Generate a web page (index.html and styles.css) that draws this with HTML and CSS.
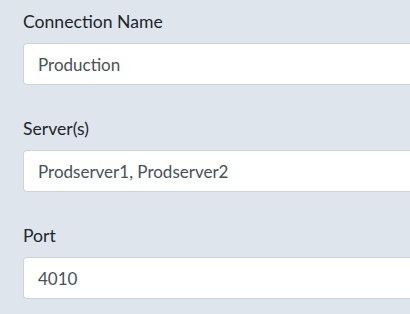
FILE: index.html
```html
<!DOCTYPE html>
<html><head><link rel="stylesheet" href="styles.css"></head>
<body>
<form class="form">
  <div class="group">
    <label class="label" for="name">Connection Name</label>
    <input class="control" id="name" type="text" value="Production">
  </div>
  <div class="group">
    <label class="label" for="servers">Server(s)</label>
    <input class="control" id="servers" type="text" value="Prodserver1, Prodserver2">
  </div>
  <div class="group">
    <label class="label" for="port">Port</label>
    <input class="control" id="port" type="text" value="4010">
  </div>
</form>
</body></html>
```
FILE: styles.css
```css
html,body{margin:0;padding:0;}
body{background:#dfe5ed;font-family:Lato,"Open Sans",sans-serif;overflow:hidden;}
.form{padding-left:23px;}
.group{padding-top:10px;margin-bottom:22px;}
.label{display:block;font-size:17.6px;line-height:24px;color:#212529;margin-bottom:9px;}
.control{display:block;box-sizing:border-box;width:100%;height:42px;margin:0;padding:1px 14px 0;border:1px solid #ced4da;border-right:0;border-radius:4px 0 0 4px;background:#fff;font-family:inherit;font-size:17px;color:#495057;outline:none;}
```
